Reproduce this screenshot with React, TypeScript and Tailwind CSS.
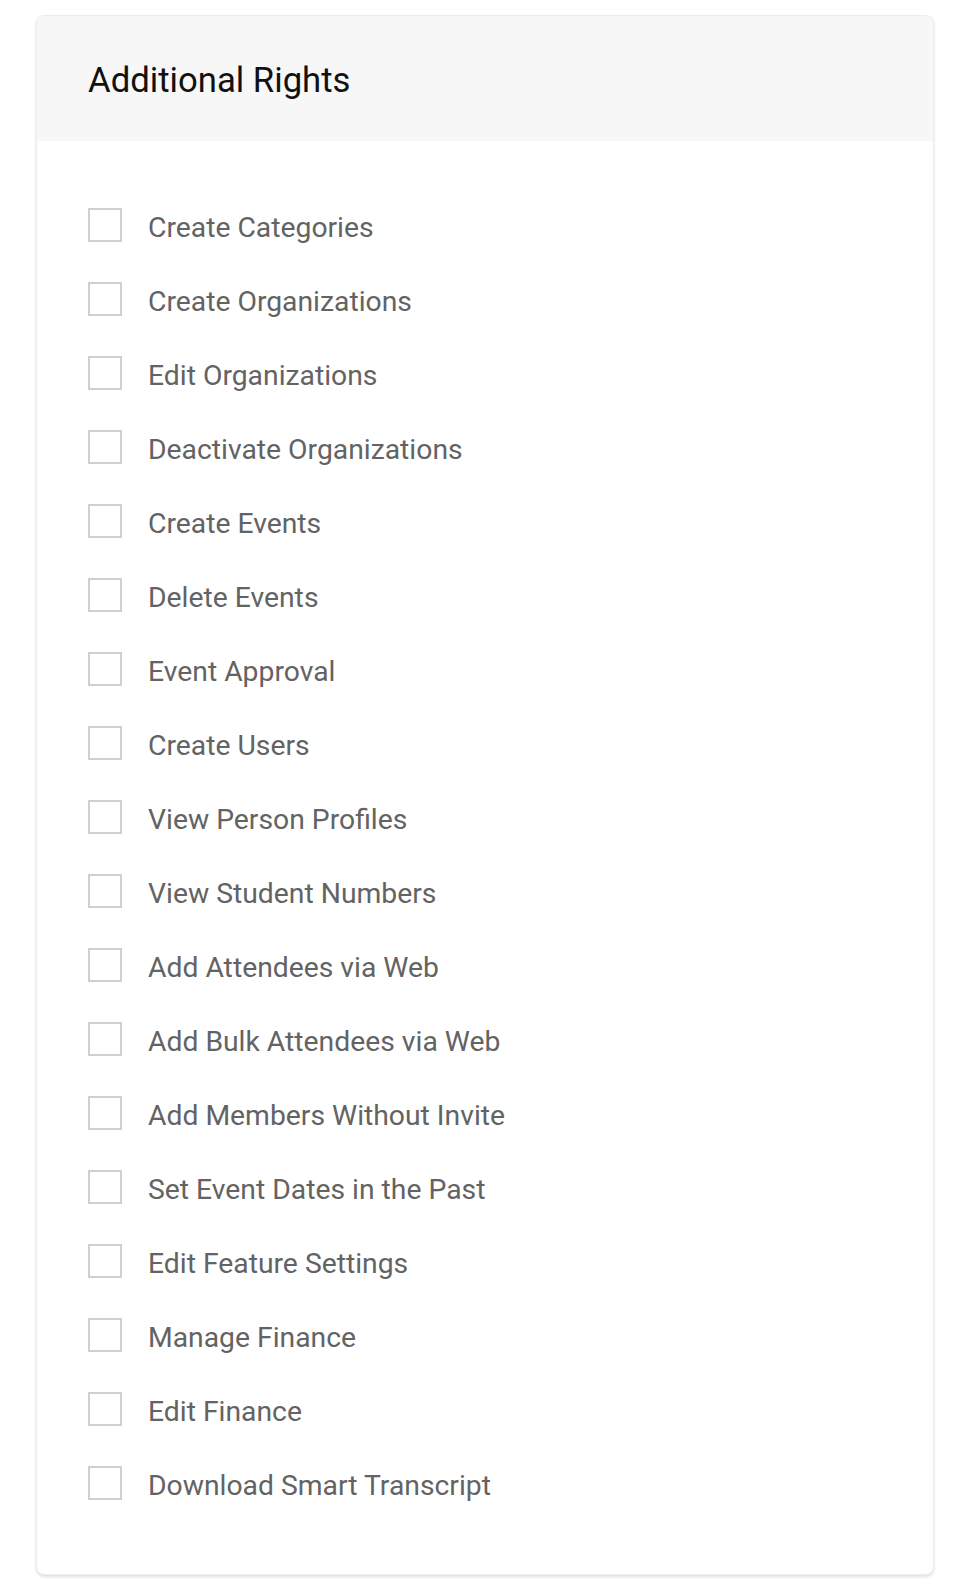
const RIGHTS = [
  'Create Categories',
  'Create Organizations',
  'Edit Organizations',
  'Deactivate Organizations',
  'Create Events',
  'Delete Events',
  'Event Approval',
  'Create Users',
  'View Person Profiles',
  'View Student Numbers',
  'Add Attendees via Web',
  'Add Bulk Attendees via Web',
  'Add Members Without Invite',
  'Set Event Dates in the Past',
  'Edit Feature Settings',
  'Manage Finance',
  'Edit Finance',
  'Download Smart Transcript',
];

export default function App() {
  return (
    <div className="min-h-screen bg-white pt-[15px] pb-[21px] pl-[36px] font-['Roboto',sans-serif]">
      <div className="w-[898px] rounded-[8px] border border-[#ececec] bg-white overflow-hidden shadow-[0_2px_3px_rgba(0,0,0,0.12)]">
        {/* Header */}
        <div className="h-[125px] bg-[#f7f7f7] flex items-center px-[51px]">
          <h2 className="pt-[4px] text-[34.7px] leading-none text-[#111111]">Additional Rights</h2>
        </div>

        {/* Checkbox list */}
        <div className="pt-[47px] pb-[54px] px-[51px] flex flex-col">
          {RIGHTS.map((label) => (
            <label key={label} className="h-[74px] flex items-center gap-[26px] cursor-pointer">
              <span className="w-[34px] h-[34px] border-2 border-[#d0d0d0] bg-white shrink-0" />
              <span className="pt-[6px] text-[28.3px] leading-none text-[#636363]">{label}</span>
            </label>
          ))}
        </div>
      </div>
    </div>
  );
}
